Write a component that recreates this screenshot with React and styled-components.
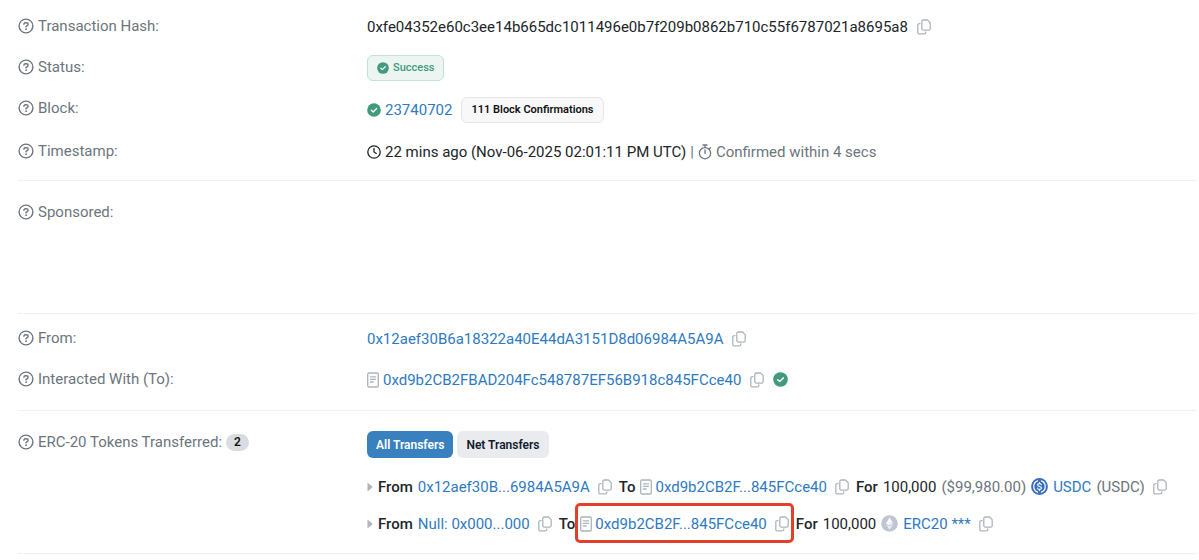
import React from 'react'
import styled, { createGlobalStyle } from 'styled-components'

const GlobalStyle = createGlobalStyle`
    * {
        box-sizing: border-box;
    }
    body {
        margin: 0;
        background: #fff;
        color: #212529;
        font-family: "Roboto", sans-serif;
        font-size: 15px;
        line-height: 24px;
    }
    svg {
        display: block;
        flex: none;
    }
`

const Page = styled.main`
    padding: 6px 2px 0 18px;
`

const Section = styled.section`
    padding: ${({ $space }) => $space || '0'};
    border-bottom: 1px solid #f0f1f3;
`

const Row = styled.div`
    display: grid;
    grid-template-columns: 349px 1fr;
    min-height: ${({ $tall }) => ($tall ? '102px' : '41px')};
`

const Label = styled.div`
    display: flex;
    align-items: center;
    gap: 4px;
    height: 40px;
    color: #6c757d;
    white-space: nowrap;
`

const Value = styled.div`
    display: flex;
    align-items: center;
    min-height: ${({ $roomy }) => ($roomy ? '43px' : '41px')};
    gap: 9px;
    white-space: nowrap;
`

const Group = styled.span`
    display: inline-flex;
    align-items: center;
    gap: 4px;
`

const Link = styled.a`
    color: #2f7abf;
    text-decoration: none;
`

const CopyButton = styled.button`
    display: inline-flex;
    margin: 0;
    padding: 0;
    border: none;
    background: none;
    color: #adb5bd;
    cursor: pointer;
`

const Badge = styled.span`
    display: inline-flex;
    align-items: center;
    gap: 4px;
    height: 26px;
    padding: 0 9px;
    border: 1px solid ${({ $success }) => ($success ? '#bfe3d8' : '#e4e5e7')};
    border-radius: 6px;
    background: ${({ $success }) => ($success ? '#edf5f3' : '#f8f8f9')};
    color: ${({ $success }) => ($success ? '#419a7c' : '#111')};
    font-size: 11px;
    font-weight: ${({ $success }) => ($success ? '500' : '600')};
`

const Count = styled.span`
    height: 17px;
    padding: 0 8px;
    border-radius: 9px;
    background: #d9dce1;
    color: #111;
    font-size: 12px;
    font-weight: 600;
    line-height: 17px;
`

const Muted = styled.span`
    display: inline-flex;
    align-items: center;
    gap: 4px;
    color: #6c757d;
`

const Strong = styled.span`
    font-weight: 500;
`

const Transfers = styled.div`
    padding-top: 9px;
`

const Tabs = styled.div`
    display: flex;
    gap: 4px;
    margin-bottom: 10px;
`

const Tab = styled.button`
    height: 27px;
    padding: 0 9px;
    border: none;
    border-radius: 6px;
    background: ${({ $active }) => ($active ? '#3881be' : '#e9ebef')};
    color: ${({ $active }) => ($active ? '#fff' : '#111b2b')};
    font-family: inherit;
    font-size: 12px;
    font-weight: 600;
    cursor: pointer;
`

const Transfer = styled.div`
    display: flex;
    align-items: center;
    gap: 5px;
    height: 37px;
    white-space: nowrap;
`

const Party = styled.span`
    position: relative;
    display: inline-flex;
    align-items: center;
    gap: 8px;
    margin-right: 2px;
`

const Contract = styled(Group)`
    gap: 3px;
`

const Outline = styled.span`
    position: absolute;
    inset: -9px -5px -7px -5px;
    border: 3px solid #e3402b;
    border-radius: 5px;
    pointer-events: none;
`

const QuestionIcon = () => (
    <svg width="16" height="16" viewBox="0 0 16 16" fill="none" stroke="currentColor" strokeLinecap="round" strokeLinejoin="round">
        <circle cx="8" cy="8" r="6.9" strokeWidth="1.4" />
        <path d="M5.9 6.200c.1-.9.8-1.500 1.700-1.500h.8c1 0 1.700.7 1.700 1.600 0 .6-.3 1.100-.9 1.400L8 8.400v.5" strokeWidth="1.400" />
        <circle cx="8" cy="11.200" r=".5" fill="currentColor" strokeWidth=".8" />
    </svg>
)

const CopyIcon = () => (
    <svg width="14" height="16" viewBox="0 0 14 16" fill="none" stroke="currentColor" strokeWidth="1.300" strokeLinecap="round" strokeLinejoin="round">
        <path d="M6.300 1h4.200L13.200 3.600v6a1.500 1.500 0 0 1-1.500 1.500H6.300a1.500 1.500 0 0 1-1.500-1.500V2.500A1.500 1.500 0 0 1 6.300 1z" />
        <path d="M3 4.600h-.7A1.500 1.500 0 0 0 .8 6.100v7.300a1.500 1.500 0 0 0 1.500 1.500h5a1.500 1.500 0 0 0 1.500-1.500v-.5" />
    </svg>
)

const CheckIcon = ({ size = 14 }) => (
    <svg width={size} height={size} viewBox="0 0 16 16" fill="none">
        <circle cx="8" cy="8" r="7.800" fill="#419a7c" />
        <path d="M5 8.200l2.100 2 3.900-3.900" stroke="#fff" strokeWidth="1.600" strokeLinecap="round" strokeLinejoin="round" />
    </svg>
)

const ClockIcon = () => (
    <svg width="14" height="14" viewBox="0 0 14 14" fill="none" stroke="currentColor" strokeWidth="1.300" strokeLinecap="round" strokeLinejoin="round">
        <circle cx="7" cy="7" r="6.200" />
        <path d="M7 3.500V7l2.300 1.500" />
    </svg>
)

const StopwatchIcon = () => (
    <svg width="14" height="16" viewBox="0 0 14 16" fill="none" stroke="currentColor" strokeWidth="1.300" strokeLinecap="round">
        <circle cx="7" cy="9.200" r="5.600" />
        <path d="M7 6v3.500M5 1h4M7 1v2.400M11.200 5l1.200-1.200" />
    </svg>
)

const ContractIcon = () => (
    <svg width="12" height="16" viewBox="0 0 12 16" fill="none" stroke="#adb5bd" strokeWidth="1.300" strokeLinecap="round">
        <rect x=".7" y="1" width="10.600" height="14" rx="1.200" />
        <path d="M3.400 4.800h5.200M3.400 7.400h5.200M3.400 10h2.800" />
    </svg>
)

const CaretIcon = () => (
    <svg width="6" height="10" viewBox="0 0 6 10">
        <path d="M.5 1.200v7.600q0 .7.600.2L5.300 5.500q.5-.5 0-1L1.100 1Q.5.500.5 1.200z" fill="#adb5bd" />
    </svg>
)

const UsdcIcon = () => (
    <svg width="17" height="17" viewBox="0 0 17 17" fill="none" stroke="#fff" strokeLinecap="round">
        <circle cx="8.500" cy="8.500" r="8.400" fill="#3a6fc0" stroke="none" />
        <path d="M6.600 2.900a6 6 0 0 0 0 11.200M10.400 2.900a6 6 0 0 1 0 11.200" strokeWidth="1.200" />
        <path d="M10.400 6.800c-.2-.8-.9-1.200-1.900-1.200-1.100 0-1.900.5-1.900 1.400 0 2 3.900 1 3.900 3 0 .9-.8 1.400-2 1.400-1.100 0-1.900-.5-2-1.400M8.500 4.500v1M8.500 11.500v1" strokeWidth="1.100" />
    </svg>
)

const EtherIcon = () => (
    <svg width="17" height="17" viewBox="0 0 17 17">
        <circle cx="8.500" cy="8.500" r="8.300" fill="#bfc5d1" />
        <path d="M8.500 2.600 5 8.600l3.500 2 3.500-2z" fill="#fff" />
        <path d="M5 9.500l3.500 4.900L12 9.500l-3.500 2z" fill="#f1f3f6" />
        <path d="M8.500 7.100v3.500l3.500-2z" fill="#e3e6ec" />
    </svg>
)

function Copy() {
    return (
        <CopyButton type="button" aria-label="Copy">
            <CopyIcon />
        </CopyButton>
    )
}

function Field({ label, tall, roomy, children }) {
    return (
        <Row $tall={tall}>
            <Label>
                <QuestionIcon />
                {label}
            </Label>
            <Value $roomy={roomy}>{children}</Value>
        </Row>
    )
}

export default function App() {
    return (
        <Page>
            <GlobalStyle />
            <Section $space="0 0 8px">
                <Field label="Transaction Hash:">
                    <span>0xfe04352e60c3ee14b665dc1011496e0b7f209b0862b710c55f6787021a8695a8</span>
                    <Copy />
                </Field>
                <Field label="Status:">
                    <Badge $success><CheckIcon size={12} />Success</Badge>
                </Field>
                <Field label="Block:" roomy>
                    <Group>
                        <CheckIcon />
                        <Link href="#block">23740702</Link>
                    </Group>
                    <Badge>111 Block Confirmations</Badge>
                </Field>
                <Field label="Timestamp:">
                    <Group>
                        <ClockIcon />
                        <span>22 mins ago (Nov-06-2025 02:01:11 PM UTC)</span>
                        <Muted>|<StopwatchIcon />Confirmed within 4 secs</Muted>
                    </Group>
                </Field>
            </Section>
            <Section $space="11px 0 19px">
                <Field label="Sponsored:" tall />
            </Section>
            <Section $space="4px 0 10px">
                <Field label="From:">
                    <Link href="#from">0x12aef30B6a18322a40E44dA3151D8d06984A5A9A</Link>
                    <Copy />
                </Field>
                <Field label="Interacted With (To):">
                    <Group>
                        <ContractIcon />
                        <Link href="#to">0xd9b2CB2FBAD204Fc548787EF56B918c845FCce40</Link>
                    </Group>
                    <Copy />
                    <CheckIcon size={15} />
                </Field>
            </Section>
            <Section $space="11px 0 11px">
                <Row>
                    <Label><QuestionIcon />ERC-20 Tokens Transferred:<Count>2</Count></Label>
                    <Transfers>
                        <Tabs>
                            <Tab type="button" $active>All Transfers</Tab>
                            <Tab type="button">Net Transfers</Tab>
                        </Tabs>
                        <Transfer>
                            <CaretIcon />
                            <Strong>From</Strong>
                            <Party>
                                <Link href="#from">0x12aef30B...6984A5A9A</Link>
                                <Copy />
                            </Party>
                            <Strong>To</Strong>
                            <Party>
                                <Contract>
                                    <ContractIcon />
                                    <Link href="#to">0xd9b2CB2F...845FCce40</Link>
                                </Contract>
                                <Copy />
                            </Party>
                            <Strong>For</Strong>
                            <span>100,000</span>
                            <Muted>($99,980.00)</Muted>
                            <UsdcIcon />
                            <Link href="#usdc">USDC</Link>
                            <Party>
                                <Muted>(USDC)</Muted>
                                <Copy />
                            </Party>
                        </Transfer>
                        <Transfer>
                            <CaretIcon />
                            <Strong>From</Strong>
                            <Party>
                                <Link href="#null">Null: 0x000...000</Link>
                                <Copy />
                            </Party>
                            <Strong>To</Strong>
                            <Party>
                                <Contract>
                                    <ContractIcon />
                                    <Link href="#to">0xd9b2CB2F...845FCce40</Link>
                                </Contract>
                                <Copy />
                                <Outline />
                            </Party>
                            <Strong>For</Strong>
                            <span>100,000</span>
                            <EtherIcon />
                            <Party>
                                <Link href="#erc20">ERC20 ***</Link>
                                <Copy />
                            </Party>
                        </Transfer>
                    </Transfers>
                </Row>
            </Section>
        </Page>
    )
}
